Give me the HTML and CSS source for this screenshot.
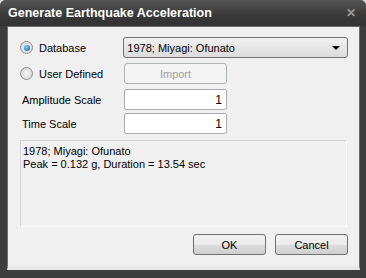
FILE: index.html
```html
<!DOCTYPE html>
<html lang="en">
<head>
  <meta charset="UTF-8" />
  <title>Generate Earthquake Acceleration</title>
  <link rel="stylesheet" href="styles.css">
</head>
<body>
  <div class="window">
    <div class="titlebar">
      <span class="title">Generate Earthquake Acceleration</span>
      <span class="close">&#x2715;</span>
    </div>
    <div class="content">
      <div class="row">
        <label class="radio-label"><span class="radio checked"></span>Database</label>
        <div class="combo">
          <span>1978; Miyagi: Ofunato</span>
          <span class="arrow"></span>
        </div>
      </div>
      <div class="row">
        <label class="radio-label"><span class="radio"></span>User Defined</label>
        <button class="btn disabled">Import</button>
      </div>
      <div class="row">
        <span class="field-label">Amplitude Scale</span>
        <div class="input">1</div>
      </div>
      <div class="row">
        <span class="field-label">Time Scale</span>
        <div class="input">1</div>
      </div>
      <div class="info">
        1978; Miyagi: Ofunato<br>
        Peak = 0.132 g, Duration = 13.54 sec
      </div>
      <div class="buttons">
        <button class="btn">OK</button>
        <button class="btn">Cancel</button>
      </div>
    </div>
  </div>
</body>
</html>
```

FILE: styles.css
```css
body {
  margin: 0;
  background-color: #d8d8d8;
  font-family: "Liberation Sans", Arial, sans-serif;
  font-size: 11px;
  color: #000;
}

.window {
  width: 366px;
  height: 278px;
  box-sizing: border-box;
  background-color: #3d3d3d;
  border-radius: 6px 6px 0 0;
  padding: 0 6px 8px 7px;
  display: flex;
  flex-direction: column;
}

.titlebar {
  height: 26px;
  display: flex;
  align-items: center;
  justify-content: space-between;
  background: linear-gradient(#565656, #383838 60%, #333);
  margin: 0 -6px 0 -7px;
  padding: 0 10px 0 8px;
  border-radius: 6px 6px 0 0;
}

.title {
  color: #fff;
  font-weight: bold;
  font-size: 12.5px;
}

.close {
  color: #9a9a9a;
  font-weight: bold;
  font-size: 12px;
}

.content {
  flex: 1;
  background-color: #f0f0f0;
  border: 1px solid #6a6a6a;
  border-bottom: 4px solid #e6e6e6;
  padding: 10px 11px 0 12px;
  display: flex;
  flex-direction: column;
}

.row {
  display: flex;
  align-items: center;
  height: 21px;
  margin-bottom: 5px;
}

.row:nth-child(3) {
  margin-bottom: 3px;
}

.radio-label, .field-label {
  width: 104px;
  display: flex;
  align-items: center;
}

.field-label {
  padding-left: 2px;
  width: 102px;
}

.radio {
  width: 13px;
  height: 13px;
  border: 1px solid #8f8f8f;
  border-radius: 50%;
  background: radial-gradient(#f6f6f6, #d0d0d0);
  margin-right: 6px;
  box-sizing: border-box;
  display: flex;
  align-items: center;
  justify-content: center;
}

.radio.checked::after {
  content: "";
  width: 6px;
  height: 6px;
  border-radius: 50%;
  background: radial-gradient(circle at 40% 35%, #7fd0ff, #0a5a9c);
}

.combo {
  width: 226px;
  height: 21px;
  box-sizing: border-box;
  border: 1px solid #707070;
  border-radius: 3px;
  background: linear-gradient(#f2f2f2, #e6e6e6 50%, #dcdcdc);
  display: flex;
  align-items: center;
  justify-content: space-between;
  padding: 0 7px 0 3px;
}

.arrow {
  width: 0;
  height: 0;
  border-left: 4px solid transparent;
  border-right: 4px solid transparent;
  border-top: 4px solid #000;
}

.btn {
  font-family: inherit;
  font-size: 11px;
  height: 21px;
  border: 1px solid #707070;
  border-radius: 3px;
  background: linear-gradient(#f2f2f2, #ebebeb 50%, #dddddd 51%, #cfcfcf);
  color: #000;
  padding: 0;
}

.btn.disabled {
  width: 103px;
  color: #a0a0a0;
  border-color: #adb2b5;
  background: #f4f4f4;
}

.input {
  width: 103px;
  height: 21px;
  box-sizing: border-box;
  border: 1px solid #abadb3;
  border-radius: 2px;
  background-color: #fff;
  text-align: right;
  padding: 3px 4px 0 0;
  font-size: 12px;
}

.info {
  margin-top: 1px;
  height: 87px;
  box-sizing: border-box;
  border: 1px solid #d5d5d5;
  border-right-color: #fff;
  border-bottom-color: #fff;
  padding: 4px 2px;
  line-height: 13px;
  margin-right: 1px;
}

.buttons {
  display: flex;
  justify-content: flex-end;
  gap: 9px;
  margin-top: 7px;
}

.buttons .btn {
  width: 73px;
}
```
